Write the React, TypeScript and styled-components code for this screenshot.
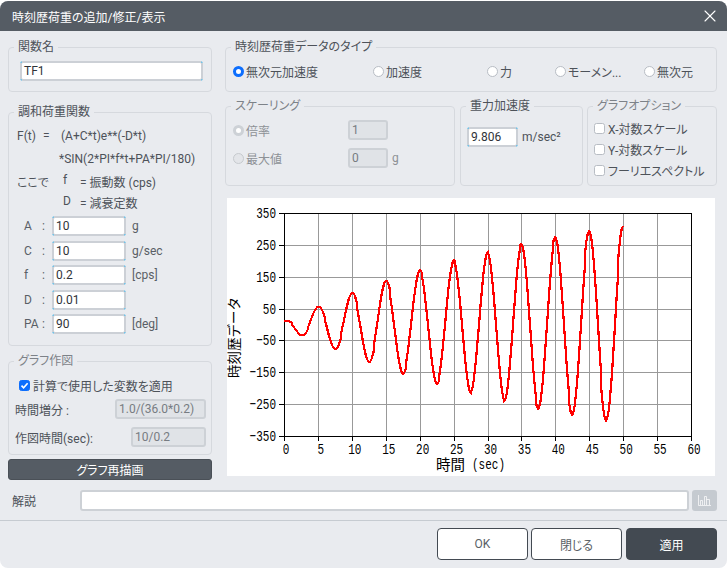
import { createGlobalStyle, css, styled } from "styled-components";
import { X } from "lucide-react";

const GlobalStyle = createGlobalStyle`
  html, body { margin: 0; padding: 0; background: #fff; }
  * { box-sizing: border-box; }
  body {
    font-family: Roboto, "Noto Sans CJK JP", sans-serif;
    font-size: 12px;
    color: #4d5259;
    font-feature-settings: "palt";
  }
`;

const Window = styled.div`
  width: 727px;
  height: 568px;
  padding-top: 1px;
  overflow: hidden;
`;

const Dialog = styled.div`
  height: 567px;
  background: #e9ebef;
  border-radius: 8px;
  overflow: hidden;
  display: flex;
  flex-direction: column;
`;

const TitleBar = styled.div`
  height: 30px;
  flex: none;
  display: flex;
  align-items: center;
  justify-content: space-between;
  padding: 0 7px 0 12px;
  background: #555c64;
  color: #fff;
  font-size: 12px;
`;

const Body = styled.div`
  display: grid;
  grid-template-columns: 204px 492px;
  column-gap: 13px;
  padding: 8px 0 0 8px;
`;

const Column = styled.div`
  display: flex;
  flex-direction: column;
`;

const Group = styled.fieldset<{ $h: number; $mt?: number; $ml?: number; $w?: number }>`
  margin: ${(p) => p.$mt ?? 0}px 0 0 ${(p) => p.$ml ?? 0}px;
  padding: 0;
  min-width: 0;
  height: ${(p) => p.$h}px;
  width: ${(p) => (p.$w ? `${p.$w}px` : "auto")};
  flex: none;
  border: 1px solid #d6d9de;
  border-radius: 4px;
`;

const Legend = styled.legend<{ $muted?: boolean }>`
  margin-left: 5px;
  padding: 0 4px;
  height: 16px;
  line-height: 16px;
  font-size: 12px;
  color: ${(p) => (p.$muted ? "#7d8288" : "#4d5259")};
`;

// grey edge with the small cyan corners the editable fields have
const editableEdge = css`
  border-color: transparent;
  background:
    linear-gradient(#fff, #fff) padding-box,
    linear-gradient(#74c2e6, #74c2e6) 0 0 / 2px 2px no-repeat border-box,
    linear-gradient(#74c2e6, #74c2e6) 100% 0 / 2px 2px no-repeat border-box,
    linear-gradient(#74c2e6, #74c2e6) 0 100% / 2px 2px no-repeat border-box,
    linear-gradient(#74c2e6, #74c2e6) 100% 100% / 2px 2px no-repeat border-box,
    linear-gradient(#ccd0d6, #ccd0d6) border-box;
`;

const TextBox = styled.div<{ $w: number; $disabled?: boolean }>`
  width: ${(p) => p.$w}px;
  height: 20px;
  flex: none;
  display: flex;
  align-items: center;
  padding: 0 2px;
  border-radius: 3px;
  border: 2px solid #cdd1d6;
  color: ${(p) => (p.$disabled ? "#777c82" : "#2f3338")};
  font-size: 12px;
  ${(p) =>
    p.$disabled
      ? css`
          background: #e0e3e7;
        `
      : editableEdge}
`;

const NameBody = styled.div`
  padding: 6px 10px 0 11px;
`;

const Formula = styled.div`
  padding: 4px 0 0 8px;
  display: grid;
  grid-template-columns: 44px 1fr;
  grid-template-rows: 23px 23px 23px 19px;
  align-items: center;
`;

const Term = styled.div<{ $x?: number }>`
  margin-left: ${(p) => p.$x ?? 0}px;
  white-space: nowrap;
  display: flex;
`;

const Sym = styled.span<{ $w: number }>`
  width: ${(p) => p.$w}px;
  flex: none;
`;

const Params = styled.div`
  padding-top: 4px;
  display: flex;
  flex-direction: column;
  gap: 4.5px;
`;

const ParamRow = styled.div`
  display: grid;
  grid-template-columns: 18px 10px 80px 1fr;
  align-items: center;
  padding-left: 15px;
  height: 20px;
  color: #5a5f66;
`;

const GraphBody = styled.div`
  padding: 6px 5px 0 6px;
  display: flex;
  flex-direction: column;
`;

const CheckRow = styled.label<{ $pl?: number; $h?: number }>`
  display: flex;
  align-items: center;
  gap: 3px;
  padding-left: ${(p) => p.$pl ?? 0}px;
  height: ${(p) => p.$h ?? 20}px;
  white-space: nowrap;
`;

const CheckBox = styled.span<{ $on?: boolean }>`
  width: 11px;
  height: 11px;
  flex: none;
  border-radius: 2.5px;
  border: 1px solid ${(p) => (p.$on ? "#0d6efd" : "#b8bdc4")};
  background: ${(p) => (p.$on ? "#0d6efd" : "#fff")};
  display: flex;
  align-items: center;
  justify-content: center;
`;

const FieldRow = styled.div<{ $mt?: number }>`
  display: flex;
  align-items: center;
  justify-content: space-between;
  height: 20px;
  margin-top: ${(p) => p.$mt ?? 0}px;
`;

const Redraw = styled.button`
  margin-top: 4px;
  height: 21px;
  flex: none;
  border: 1px solid #4a5057;
  border-radius: 3px;
  background: #555c64;
  color: #fff;
  font: inherit;
  font-feature-settings: inherit;
  padding: 0;
`;

const RadioRow = styled.div`
  display: grid;
  grid-template-columns: 140px 114px 68px 89px 1fr;
  padding: 4px 0 0 7px;
  height: 28px;
  align-items: center;
`;

const Radio = styled.span<{ $on?: boolean; $disabled?: boolean }>`
  width: 11px;
  height: 11px;
  flex: none;
  border-radius: 50%;
  background: ${(p) => (p.$disabled && !p.$on ? "#e3e5e9" : "#fff")};
  border: ${(p) => {
    if (p.$on) return `3px solid ${p.$disabled ? "#cdd1d6" : "#0d6efd"}`;
    return `1px solid ${p.$disabled ? "#c6cace" : "#b8bdc4"}`;
  }};
`;

const RadioItem = styled.label<{ $disabled?: boolean }>`
  display: flex;
  align-items: center;
  gap: 2px;
  white-space: nowrap;
  color: ${(p) => (p.$disabled ? "#8d9196" : "inherit")};
`;

const OptionRow = styled.div`
  display: flex;
  margin-top: 6px;
`;

const ScaleRow = styled.div<{ $mt?: number }>`
  display: grid;
  grid-template-columns: 111px 40px auto;
  column-gap: 4px;
  justify-content: start;
  align-items: center;
  height: 20px;
  padding-left: 7px;
  margin-top: ${(p) => p.$mt ?? 0}px;
  color: #8d9196;
`;

const ScaleBody = styled.div`
  padding-top: 6px;
`;

const GravityRow = styled.div`
  display: flex;
  align-items: center;
  gap: 4px;
  padding: 13px 0 0 6px;
`;

const OptionBody = styled.div`
  padding-top: 4px;
  display: flex;
  flex-direction: column;
`;

const ChartPanel = styled.div`
  margin: 12px 2px 0;
  height: 278px;
  flex: none;
  background: #fff;
`;

const ChartSvg = styled.svg`
  display: block;
  text {
    font-family: "Liberation Mono", "Noto Sans CJK JP", monospace;
    font-size: 11px;
    fill: #000;
    font-feature-settings: normal;
  }
`;

const NoteRow = styled.div`
  display: flex;
  align-items: center;
  height: 21px;
  margin-top: 10px;
  padding-left: 12px;
`;

const NoteLabel = styled.span`
  width: 68px;
  flex: none;
`;

const NoteBox = styled.div`
  width: 609px;
  height: 21px;
  background: #fff;
  border: 2px solid #cdd1d6;
  border-radius: 3px;
`;

const IconButton = styled.div`
  width: 25px;
  height: 21px;
  margin-left: 3px;
  background: #c5cad0;
  border-radius: 3px;
  display: flex;
  align-items: center;
  justify-content: center;
`;

const Footer = styled.div`
  margin-top: 9px;
  border-top: 1px solid #c6cbd1;
  padding: 7px 10px 0 0;
  display: flex;
  justify-content: flex-end;
  gap: 3px;
`;

const FooterButton = styled.button<{ $primary?: boolean }>`
  width: 91px;
  height: 32px;
  margin-left: ${(p) => (p.$primary ? "1px" : "0")};
  border-radius: 4px;
  border: 1px solid #434a52;
  background: ${(p) => (p.$primary ? "#434a52" : "#fff")};
  color: ${(p) => (p.$primary ? "#fff" : "#5a5f66")};
  font: inherit;
  font-feature-settings: inherit;
  padding: 0;
`;

// chart geometry, read off the reference
const plot = { left: 57, right: 464, top: 15, bottom: 238 };
const yTicks = [
  { label: "350", y: 15 },
  { label: "250", y: 47 },
  { label: "150", y: 79 },
  { label: "50", y: 111 },
  { label: "-50", y: 142 },
  { label: "-150", y: 174 },
  { label: "-250", y: 206 },
  { label: "-350", y: 238 },
];
const xTicks = [0, 5, 10, 15, 20, 25, 30, 35, 40, 45, 50, 55, 60];

const toX = (t: number) => plot.left + (t / 60) * (plot.right - plot.left);
const toY = (v: number) => {
  if (v >= 50) return 111 - (v - 50) * 0.32;
  if (v >= -50) return 111 + (50 - v) * 0.31;
  return 142 + (-50 - v) * 0.32;
};

const curve = () => {
  const pts: string[] = [];
  const dt = 1 / (36 * 0.2);
  for (let i = 0; i * dt <= 50.001; i++) {
    const t = i * dt;
    const v = (10 + 10 * t) * Math.exp(-0.01 * t) * Math.sin(2 * Math.PI * 0.2 * t + Math.PI / 2);
    pts.push(`${Math.round(toX(t))},${Math.round(toY(v))}`);
  }
  return pts.join(" ");
};

function Chart() {
  return (
    <ChartSvg width="488" height="278" viewBox="0 0 488 278" shapeRendering="crispEdges">
      {xTicks.slice(1, -1).map((t) => (
        <line key={t} x1={Math.round(toX(t)) + 0.5} x2={Math.round(toX(t)) + 0.5} y1={plot.top} y2={plot.bottom} stroke="#999" />
      ))}
      {yTicks.slice(1, -1).map((t) => (
        <line key={t.label} x1={plot.left} x2={plot.right} y1={t.y + 0.5} y2={t.y + 0.5} stroke="#999" />
      ))}
      <rect x={plot.left + 0.5} y={plot.top + 0.5} width={plot.right - plot.left} height={plot.bottom - plot.top} fill="none" stroke="#000" />
      {yTicks.map((t) => (
        <line key={t.label} x1={plot.left - 5} x2={plot.left} y1={t.y + 0.5} y2={t.y + 0.5} stroke="#000" />
      ))}
      {xTicks.map((t) => (
        <line key={t} x1={Math.round(toX(t)) + 0.5} x2={Math.round(toX(t)) + 0.5} y1={plot.bottom} y2={plot.bottom + 5} stroke="#000" />
      ))}
      <polyline points={curve()} fill="none" stroke="#f00" strokeWidth="2.2" />
      {yTicks.map((t) => (
        <text key={t.label} transform={`translate(${plot.left - 8} ${t.y + 5}) scale(1 1.4)`} textAnchor="end">
          {t.label.replace("-", "−")}
        </text>
      ))}
      {xTicks.map((t) => (
        <text key={t} transform={`translate(${toX(t) + (t === 0 ? 2 : 3)} ${plot.bottom + 18}) scale(1 1.4)`} textAnchor="middle">
          {t}
        </text>
      ))}
      <text transform="translate(209 272)" style={{ fontSize: 14.5 }}>時間</text>
      <text transform="translate(245 271) scale(1 1.3)">(sec)</text>
      <text transform="translate(12 180) rotate(-90)" style={{ fontSize: 13.5 }}>時刻歴データ</text>
    </ChartSvg>
  );
}

const Tick = () => (
  <svg width="9" height="9" viewBox="0 0 9 9">
    <path d="M1.5 4.6 3.6 6.8 7.6 2.2" fill="none" stroke="#fff" strokeWidth="1.6" />
  </svg>
);

export default function App() {
  return (
    <>
      <GlobalStyle />
      <Window>
        <Dialog>
          <TitleBar>
            <span>時刻歴荷重の追加/修正/表示</span>
            <X size={20} color="#fff" strokeWidth={1.3} />
          </TitleBar>
          <Body>
            <Column>
              <Group $h={53}>
                <Legend>関数名</Legend>
                <NameBody>
                  <TextBox $w={183}>TF1</TextBox>
                </NameBody>
              </Group>
              <Group $h={242} $mt={12}>
                <Legend>調和荷重関数</Legend>
                <Formula>
                  <Term><Sym $w={26}>F(t)</Sym>=</Term>
                  <Term>(A+C*t)e**(-D*t)</Term>
                  <span />
                  <Term $x={-2}>*SIN(2*PI*f*t+PA*PI/180)</Term>
                  <Term>ここで</Term>
                  <Term $x={2}><Sym $w={17}>f</Sym>= 振動数 (cps)</Term>
                  <span />
                  <Term $x={2}><Sym $w={17}>D</Sym>= 減衰定数</Term>
                </Formula>
                <Params>
                  {[
                    ["A", "10", "g"],
                    ["C", "10", "g/sec"],
                    ["f", "0.2", "[cps]"],
                    ["D", "0.01", ""],
                    ["PA", "90", "[deg]"],
                  ].map(([name, value, unit]) => (
                    <ParamRow key={name}>
                      <span>{name}</span>
                      <span>:</span>
                      <TextBox $w={74}>{value}</TextBox>
                      <span>{unit}</span>
                    </ParamRow>
                  ))}
                </Params>
              </Group>
              <Group $h={102} $mt={7}>
                <Legend $muted>グラフ作図</Legend>
                <GraphBody>
                  <CheckRow $pl={4}>
                    <CheckBox $on><Tick /></CheckBox>
                    計算で使用した変数を適用
                  </CheckRow>
                  <FieldRow $mt={4}>
                    <span>時間増分 :</span>
                    <TextBox $w={91} $disabled>1.0/(36.0*0.2)</TextBox>
                  </FieldRow>
                  <FieldRow $mt={8}>
                    <span>作図時間(sec):</span>
                    <TextBox $w={75} $disabled>10/0.2</TextBox>
                  </FieldRow>
                </GraphBody>
              </Group>
              <Redraw>グラフ再描画</Redraw>
            </Column>
            <Column>
              <Group $h={53}>
                <Legend>時刻歴荷重データのタイプ</Legend>
                <RadioRow>
                  <RadioItem><Radio $on />無次元加速度</RadioItem>
                  <RadioItem><Radio />加速度</RadioItem>
                  <RadioItem><Radio />力</RadioItem>
                  <RadioItem><Radio />モーメン...</RadioItem>
                  <RadioItem><Radio />無次元</RadioItem>
                </RadioRow>
              </Group>
              <OptionRow>
                <Group $h={88} $w={230}>
                  <Legend $muted>スケーリング</Legend>
                  <ScaleBody>
                    <ScaleRow>
                      <RadioItem $disabled><Radio $disabled $on />倍率</RadioItem>
                      <TextBox $w={40} $disabled>1</TextBox>
                    </ScaleRow>
                    <ScaleRow $mt={8}>
                      <RadioItem $disabled><Radio $disabled />最大値</RadioItem>
                      <TextBox $w={40} $disabled>0</TextBox>
                      <span>g</span>
                    </ScaleRow>
                  </ScaleBody>
                </Group>
                <Group $h={88} $w={123} $ml={5}>
                  <Legend>重力加速度</Legend>
                  <GravityRow>
                    <TextBox $w={51}>9.806</TextBox>
                    <span>m/sec²</span>
                  </GravityRow>
                </Group>
                <Group $h={88} $w={130} $ml={4}>
                  <Legend $muted>グラフオプション</Legend>
                  <OptionBody>
                    <CheckRow $pl={6} $h={21}><CheckBox />X-対数スケール</CheckRow>
                    <CheckRow $pl={6} $h={21}><CheckBox />Y-対数スケール</CheckRow>
                    <CheckRow $pl={6} $h={21}><CheckBox />フーリエスペクトル</CheckRow>
                  </OptionBody>
                </Group>
              </OptionRow>
              <ChartPanel>
                <Chart />
              </ChartPanel>
            </Column>
          </Body>
          <NoteRow>
            <NoteLabel>解説</NoteLabel>
            <NoteBox />
            <IconButton>
              <svg width="13" height="11" viewBox="0 0 13 11" fill="none" stroke="#fff" strokeOpacity="0.7">
                <path d="M0.5 0V10.5H13M2.5 10V5.5H4.5V10M6.5 10V1.5H8.5V10M8.5 4.5H11.5V10" />
              </svg>
            </IconButton>
          </NoteRow>
          <Footer>
            <FooterButton>OK</FooterButton>
            <FooterButton>閉じる</FooterButton>
            <FooterButton $primary>適用</FooterButton>
          </Footer>
        </Dialog>
      </Window>
    </>
  );
}
